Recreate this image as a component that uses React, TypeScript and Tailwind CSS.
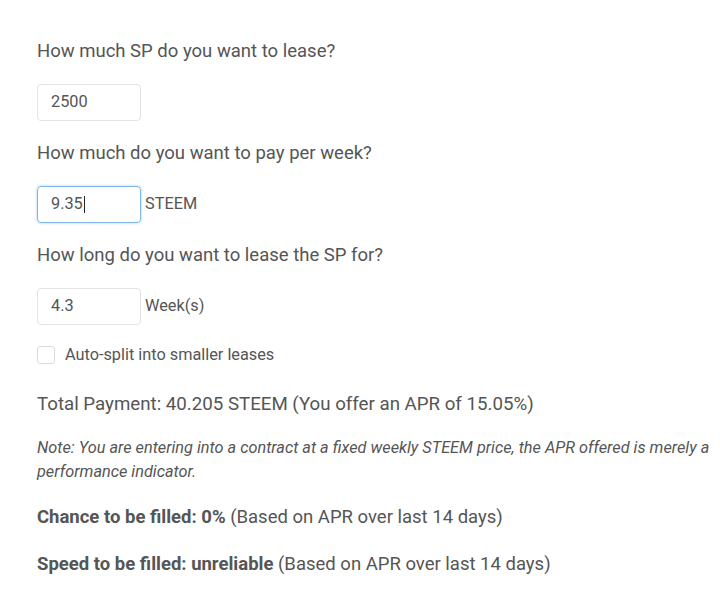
import React from "react";

const font = { fontFamily: "Roboto, 'Noto Sans', sans-serif" };

function Field({ value, unit, focused }: { value: string; unit?: string; focused?: boolean }) {
  return (
    <div className="flex items-center">
      <div
        className={
          focused
            ? "flex h-[37px] w-[104px] items-center rounded-[4px] border border-[#7fb5e8] pl-[13px] text-[16.3px] text-[#555] shadow-[0_0_3px_rgba(102,175,233,0.6)]"
            : "flex h-[37px] w-[104px] items-center rounded-[4px] border border-[#e3e3e3] pl-[13px] text-[16.3px] text-[#555]"
        }
      >
        {value}
        {focused && <span className="ml-[1px] inline-block h-[17px] w-[1.5px] bg-[#222]" />}
      </div>
      {unit && <span className="ml-[4px] text-[16.3px] text-[#555]">{unit}</span>}
    </div>
  );
}

export default function App() {
  return (
    <div className="min-h-[605px] w-[720px] bg-white pl-[37px] pt-[38px] text-[#555]" style={font}>
      <div className="text-[18.5px] leading-[27px]">How much SP do you want to lease?</div>
      <div className="mt-[19px]">
        <Field value="2500" />
      </div>
      <div className="mt-[19px] text-[18.5px] leading-[27px]">How much do you want to pay per week?</div>
      <div className="mt-[19px]">
        <Field value="9.35" unit="STEEM" focused />
      </div>
      <div className="mt-[19px] text-[18.5px] leading-[27px]">How long do you want to lease the SP for?</div>
      <div className="mt-[19px]">
        <Field value="4.3" unit="Week(s)" />
      </div>
      <div className="mt-[21px] flex h-[18px] items-center">
        <span className="h-[18px] w-[18px] rounded-[3px] border border-[#dcdcdc] bg-white" />
        <span className="ml-[10px] text-[16.3px]">Auto-split into smaller leases</span>
      </div>
      <div className="mt-[27px] text-[18.7px] leading-[27px]">
        Total Payment: 40.205 STEEM (You offer an APR of 15.05%)
      </div>
      <div className="mt-[18px] text-[16.3px] italic leading-[24px]">
        Note: You are entering into a contract at a fixed weekly STEEM price, the APR offered is merely a performance indicator.
      </div>
      <div className="mt-[20px] text-[18.5px] leading-[27px]">
        <span className="font-bold">Chance to be filled: 0%</span> (Based on APR over last 14 days)
      </div>
      <div className="mt-[20px] text-[18.5px] leading-[27px]">
        <span className="font-bold">Speed to be filled: unreliable</span> (Based on APR over last 14 days)
      </div>
    </div>
  );
}
